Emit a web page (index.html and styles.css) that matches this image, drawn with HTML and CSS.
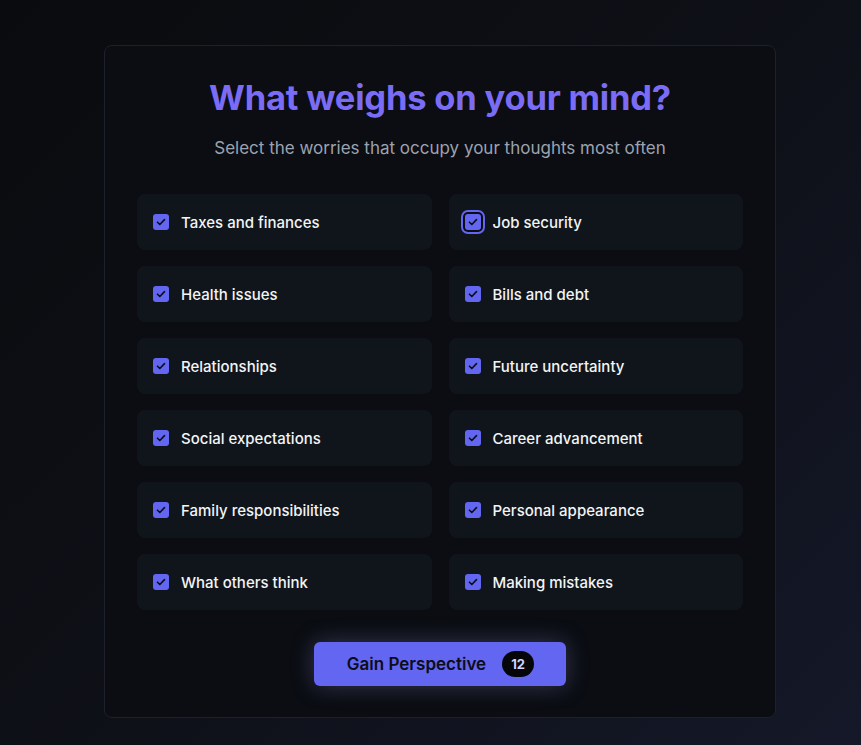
FILE: index.html
```html
<!DOCTYPE html>
<html lang="en">
<head>
<meta charset="utf-8">
<title>What weighs on your mind?</title>
<link rel="stylesheet" href="styles.css">
</head>
<body>
<main class="page">
  <section class="card">
    <h1 class="title">What weighs on your mind?</h1>
    <p class="subtitle">Select the worries that occupy your thoughts most often</p>
    <div class="grid">
      <label class="item"><span class="box"><svg viewBox="0 0 16 16"><path d="M4.5 8.2l2.3 2.3 4.7-4.9"/></svg></span><span class="label">Taxes and finances</span></label>
      <label class="item"><span class="box focus"><svg viewBox="0 0 16 16"><path d="M4.5 8.2l2.3 2.3 4.7-4.9"/></svg></span><span class="label">Job security</span></label>
      <label class="item"><span class="box"><svg viewBox="0 0 16 16"><path d="M4.5 8.2l2.3 2.3 4.7-4.9"/></svg></span><span class="label">Health issues</span></label>
      <label class="item"><span class="box"><svg viewBox="0 0 16 16"><path d="M4.5 8.2l2.3 2.3 4.7-4.9"/></svg></span><span class="label">Bills and debt</span></label>
      <label class="item"><span class="box"><svg viewBox="0 0 16 16"><path d="M4.5 8.2l2.3 2.3 4.7-4.9"/></svg></span><span class="label">Relationships</span></label>
      <label class="item"><span class="box"><svg viewBox="0 0 16 16"><path d="M4.5 8.2l2.3 2.3 4.7-4.9"/></svg></span><span class="label">Future uncertainty</span></label>
      <label class="item"><span class="box"><svg viewBox="0 0 16 16"><path d="M4.5 8.2l2.3 2.3 4.7-4.9"/></svg></span><span class="label">Social expectations</span></label>
      <label class="item"><span class="box"><svg viewBox="0 0 16 16"><path d="M4.5 8.2l2.3 2.3 4.7-4.9"/></svg></span><span class="label">Career advancement</span></label>
      <label class="item"><span class="box"><svg viewBox="0 0 16 16"><path d="M4.5 8.2l2.3 2.3 4.7-4.9"/></svg></span><span class="label">Family responsibilities</span></label>
      <label class="item"><span class="box"><svg viewBox="0 0 16 16"><path d="M4.5 8.2l2.3 2.3 4.7-4.9"/></svg></span><span class="label">Personal appearance</span></label>
      <label class="item"><span class="box"><svg viewBox="0 0 16 16"><path d="M4.5 8.2l2.3 2.3 4.7-4.9"/></svg></span><span class="label">What others think</span></label>
      <label class="item"><span class="box"><svg viewBox="0 0 16 16"><path d="M4.5 8.2l2.3 2.3 4.7-4.9"/></svg></span><span class="label">Making mistakes</span></label>
    </div>
    <div class="actions">
      <button class="btn" type="button">Gain Perspective <span class="badge">12</span></button>
    </div>
  </section>
</main>
</body>
</html>
```

FILE: styles.css
```css
* { box-sizing: border-box; }
html, body { margin: 0; height: 100%; }
body {
  font-family: Inter, "Noto Sans", sans-serif;
  background: linear-gradient(135deg, #0a0b0e 0%, #0e1017 50%, #141828 100%);
  color: #e5e7eb;
}
.page {
  min-height: 745px;
  padding: 45px 85px 27px 104px;
}
.card {
  width: 672px;
  border: 1px solid #1d212b;
  border-radius: 8px;
  background: #0b0d13;
  padding: 32px 32px 31px;
}
.title {
  margin: 0;
  text-align: center;
  font-size: 34.5px;
  line-height: 40px;
  font-weight: 700;
  color: #7b6cf6;
  letter-spacing: -0.2px;
}
.subtitle {
  margin: 16px 0 0;
  text-align: center;
  font-size: 17px;
  line-height: 28px;
  color: #9ca3af;
}
.grid {
  margin-top: 32px;
  display: grid;
  grid-template-columns: 1fr 1fr;
  gap: 16px 17px;
}
.item {
  display: flex;
  align-items: center;
  gap: 12px;
  height: 56px;
  padding: 0 16px;
  background: #10141b;
  border-radius: 8px;
}
.box {
  width: 16px;
  height: 16px;
  border-radius: 3px;
  background: #6366f1;
  display: flex;
  flex: none;
}
.box svg {
  width: 16px;
  height: 16px;
  fill: none;
  stroke: #0b0d17;
  stroke-width: 1.6;
  stroke-linecap: round;
  stroke-linejoin: round;
}
.box.focus {
  box-shadow: 0 0 0 2px #0b0d13, 0 0 0 4px #6366f1;
}
.label {
  font-size: 15px;
  font-weight: 500;
  line-height: 24px;
  color: #f3f4f6;
  position: relative;
  top: 1px;
}
.actions {
  margin-top: 32px;
  display: flex;
  justify-content: center;
}
.btn {
  display: flex;
  align-items: center;
  gap: 16px;
  height: 44px;
  padding: 0 32px 0 33px;
  border: none;
  border-radius: 6px;
  background: #6366f1;
  color: #0b0d17;
  font-family: Inter, "Noto Sans", sans-serif;
  font-size: 17px;
  font-weight: 600;
  box-shadow: 0 0 22px rgba(129, 132, 200, 0.35);
}
.badge {
  min-width: 32px;
  height: 26px;
  padding: 0 8px;
  border-radius: 999px;
  background: #05060a;
  color: #d4d3ff;
  font-size: 13px;
  font-weight: 700;
  display: flex;
  align-items: center;
  justify-content: center;
}
```
